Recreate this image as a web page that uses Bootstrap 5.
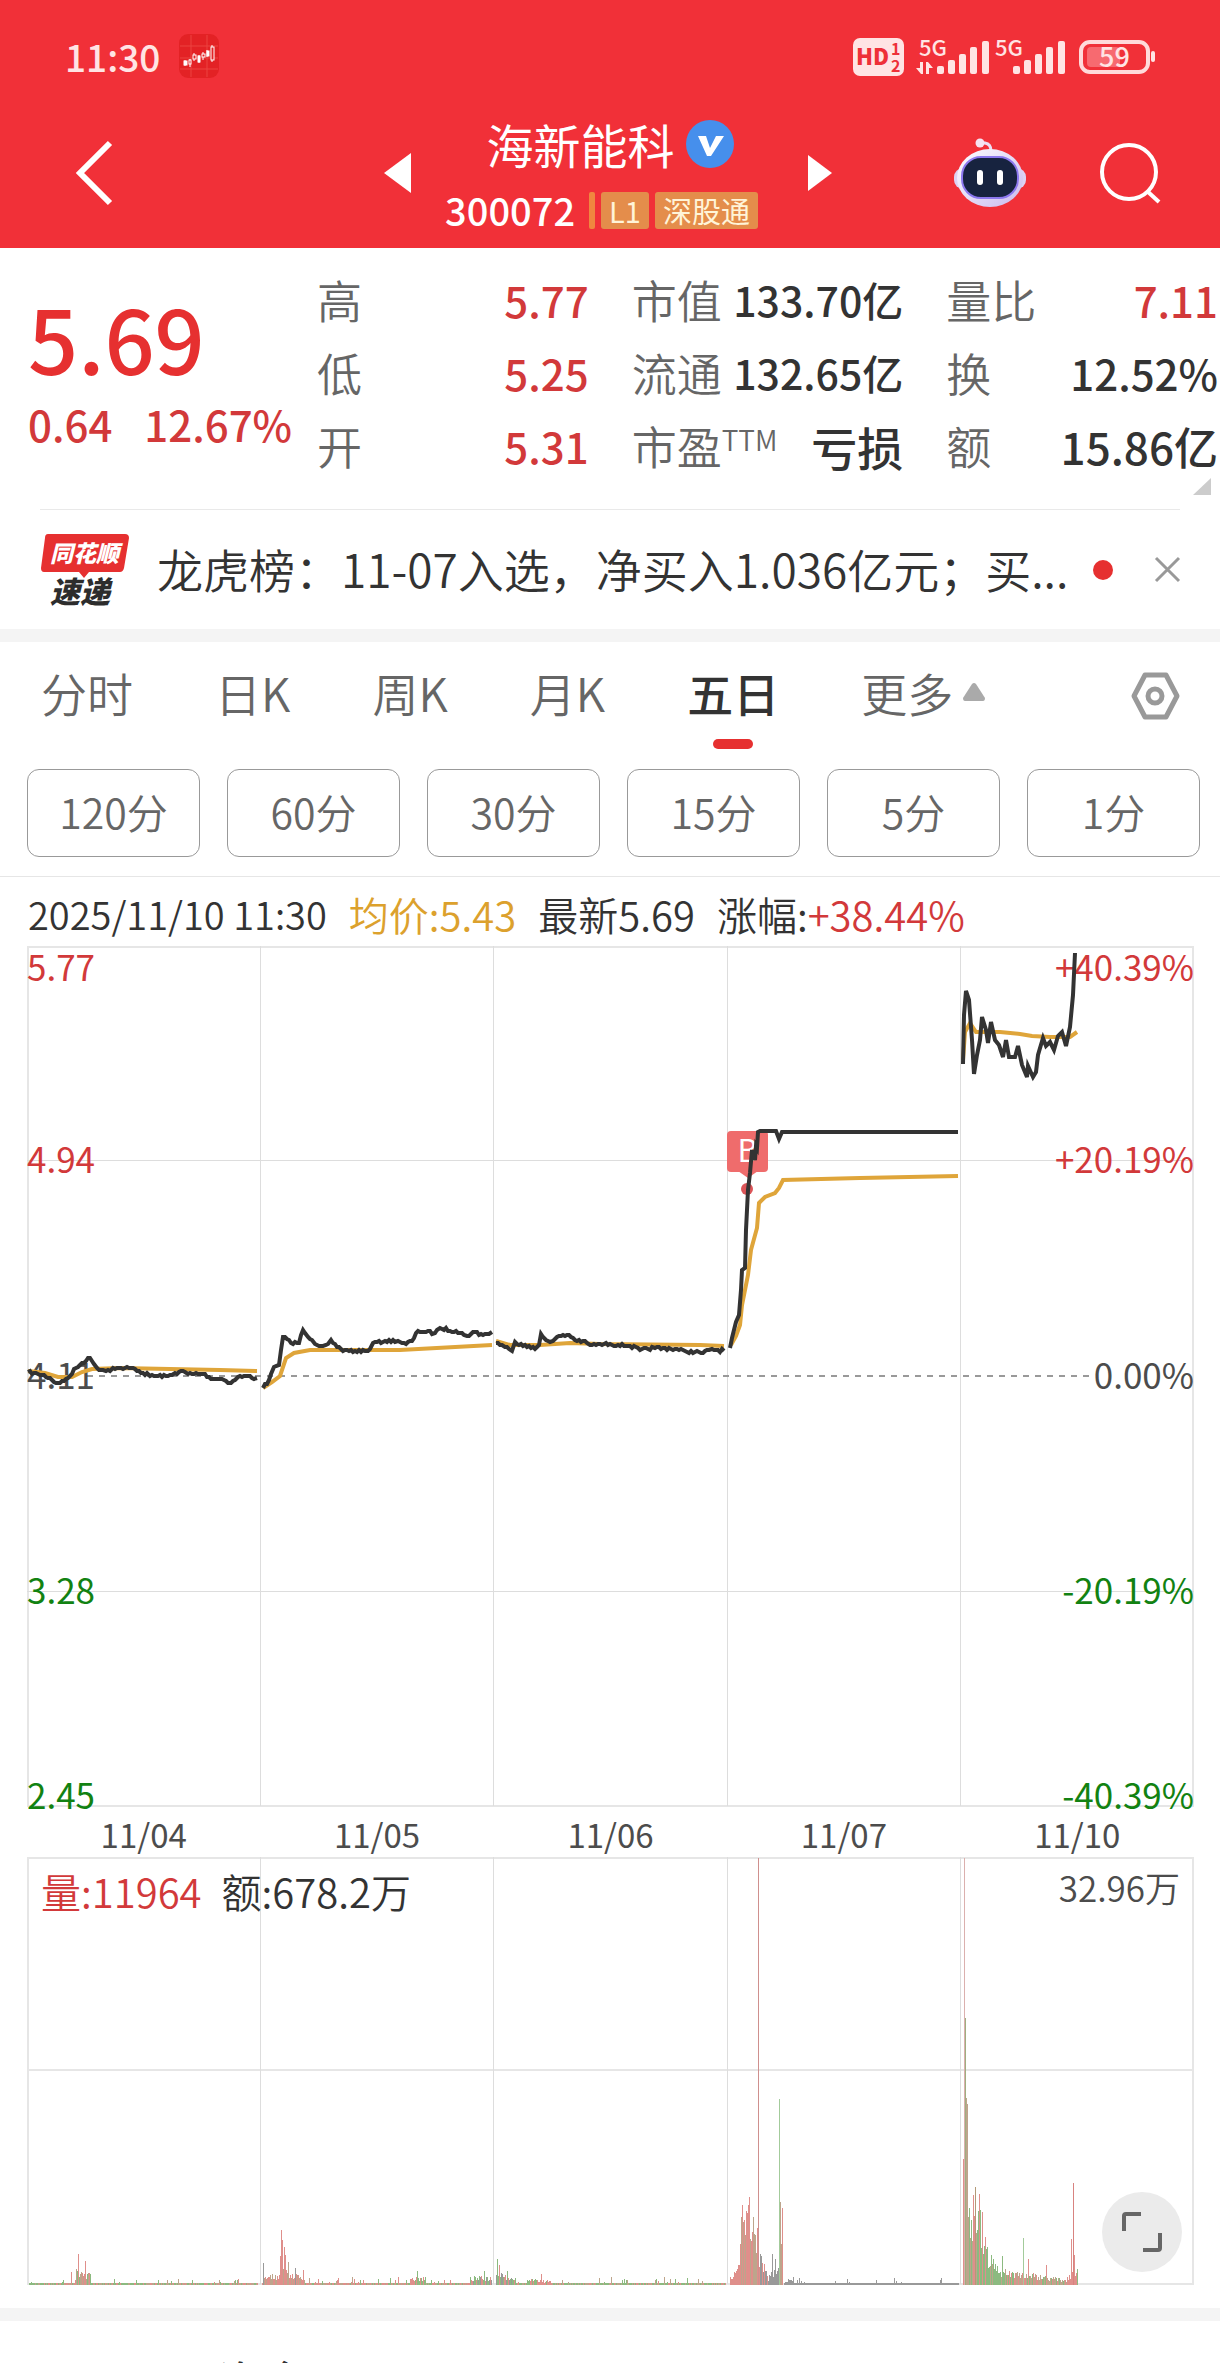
<!DOCTYPE html>
<html lang="zh-CN">
<head>
<meta charset="utf-8">
<meta name="viewport" content="width=device-width, initial-scale=1">
<title>海新能科 300072</title>
<link rel="stylesheet" href="https://cdn.jsdelivr.net/npm/bootstrap@5.3.0/dist/css/bootstrap.min.css">
<style>
  :root { --up:#d2393a; --down:#128212; --ink:#333; --soft:#666; --rule:#e6e6e6; --band:#f4f4f4; }
  body { font-family:"Noto Sans CJK SC","Noto Sans",sans-serif; color:var(--ink); background:#fff; line-height:1; overflow-x:hidden; }
  button { font-family:inherit; }
  svg { display:block; flex:none; overflow:visible; }
  .up { color:var(--up); } .down { color:var(--down); }
  .bare { background:none; border:0; padding:0; color:inherit; }
  .app-head { background:#f13038; color:#fff; }
  .status-row { height:112px; padding:0 64px 0 65px; }
  .clock-group { gap:19px; }
  .clock { font-size:37px; line-height:48px; color:#ffe4e4; font-weight:500; }
  .head-row { display:grid; grid-template-columns:1fr auto 1fr; height:136px; padding:0 60px 14px 76px; }
  .quote-switch { margin-left:-20px; }
  .title-block { padding:0 50px 0 34px; }
  .name-line { gap:12px; padding-left:18px; margin-bottom:18px; }
  .code-line { gap:6px; }
  .stock-name { font-size:47px; line-height:56px; font-weight:400; }
  .stock-code { font-size:38px; line-height:40px; font-weight:500; }
  .tag { background:#e48d4b; color:#fff4d8; font-size:29px; line-height:37px; border-radius:3px; padding:0 8px; }
  .tag-bar { width:6px; height:37px; background:#f0863f; border-radius:2px; }
  .tools { gap:73px; }
  .quote { padding:15px 2px 27px 0; position:relative; }
  .quote-main { flex:0 0 317px; padding-left:28px; }
  .last-price { font-size:88px; line-height:96px; font-weight:500; color:#e63030; padding-top:26px; }
  .chg { font-size:42px; line-height:48px; font-weight:500; gap:32px; padding-top:15px; }
  .stats { display:grid; grid-template-columns:repeat(3,1fr); column-gap:43px; grid-auto-rows:73px; }
  .stats dt { font-size:45px; font-weight:350; color:var(--soft); white-space:nowrap; }
  .stats dd { font-size:42px; font-weight:500; white-space:nowrap; }
  .stats dd.cap { font-size:41px; }
  .stats dd.word { font-size:46px; }
  .stats dd.turnover { font-size:44px; }
  .stats sup { font-size:28px; top:-14px; line-height:1; vertical-align:baseline; }
  .corner { right:9px; bottom:14px; border-left:18px solid transparent; border-bottom:17px solid #ccc; }
  .news { margin:0 40px; border-top:1px solid #e9e9e9; height:120px; }
  .news-text { font-size:46px; line-height:60px; margin-left:27px; padding-bottom:4px; font-weight:350; color:var(--ink); text-decoration:none; }
  .dot { width:20px; height:20px; background:#e63030; margin:0 42px 0 20px; }
  .band { height:13px; background:var(--band); }
  .tabs { padding:22px 40px 0 41px; height:127px; }
  .tabs ul { gap:82px; }
  .tabs a { font-size:46px; line-height:56px; color:var(--soft); text-decoration:none; font-weight:350; white-space:nowrap; }
  .tabs a.current { color:var(--ink); font-weight:500; }
  .tabs a.current::after { content:""; display:block; width:40px; height:10px; margin:19px auto 0; border-radius:5px; background:#e63030; }
  .more { gap:10px; }
  .periods { display:grid; grid-template-columns:repeat(6,1fr); gap:27px; padding:0 20px 19px 27px; border-bottom:1px solid var(--rule); }
  .periods button { height:88px; font-size:41px; line-height:48px; color:var(--soft); border:1px solid #999; border-radius:12px; background:#fff; padding:0 0 5px; font-weight:350; }
  .readout { font-size:40px; line-height:44px; padding:15px 28px 10px; gap:22px; font-weight:350; white-space:nowrap; }
  .stamp { font-size:38px; }
  .avg { color:#dca12d; }
  .plots { margin:0 26px 0 27px; }
  .price-plot { position:relative; height:860px; }
  .vol-plot { position:relative; height:428px; }
  .price-plot > svg, .vol-plot > svg { position:absolute; left:0; top:0; width:100%; height:100%; }
  .axis { position:absolute; font-size:35px; line-height:40px; }
  .ax-l { left:0; } .ax-r { right:0; }
  .zero { color:#4c4c4c; }
  .t0 { top:0; } .t1 { top:25%; margin-top:-23px; } .t2 { top:50%; margin-top:-22px; } .t3 { top:75%; margin-top:-22px; } .t4 { bottom:-8px; }
  .buy-mark { position:absolute; left:60%; top:185px; width:41px; height:41px; border-radius:4px; background:#ef6c6c; color:#fff; font-size:31px; line-height:36px; text-align:center; }
  .buy-mark::before { content:""; position:absolute; left:11px; top:40px; border:10px solid transparent; border-top:7px solid #ef6c6c; border-bottom:0; }
  .buy-mark::after { content:""; position:absolute; left:14px; top:52px; width:12px; height:12px; border-radius:50%; background:#dc5558; }
  .dates { display:grid; grid-template-columns:repeat(5,1fr); font-size:33px; line-height:40px; text-align:center; color:#4c4c4c; padding:8px 0 3px; }
  .legend-line { position:absolute; left:14px; top:12px; font-size:40px; line-height:44px; gap:20px; font-weight:350; }
  .vol-max { position:absolute; right:14px; top:10px; font-size:35px; line-height:40px; color:#4c4c4c; font-weight:350; }
  .expand { position:absolute; right:12px; bottom:13px; width:80px; height:80px; background:#ebebeb; border-radius:50%; }
  .chart-end { margin-top:23px; }
  .next-panel { height:42px; overflow:hidden; padding:31px 0 0 218px; font-size:44px; line-height:56px; font-weight:500; }
</style>
</head>
<body>
<header class="app-head">
  <div class="status-row d-flex align-items-center justify-content-between">
    <div class="clock-group d-flex align-items-center">
      <span class="clock">11:30</span>
      <svg width="40" height="44" viewBox="0 0 40 44"><rect width="40" height="44" rx="9" fill="#e32225"/><path d="M12 1v42M28 1v42M1 12h38M1 24h38M1 35h38" stroke="#ec4340" stroke-width="1"/><g stroke="#fff" fill="#fff"><path d="M6 26v6M11 25v8M15 19v8M20 21v8M24 18v8M28 16v7M33 11v17"/><rect x="5" y="27" width="3" height="4"/><rect x="10" y="26" width="2" height="4" fill="#e32225"/><rect x="14" y="21" width="3" height="4" fill="#e32225"/><rect x="19" y="22" width="2" height="6"/><rect x="23" y="20" width="3" height="3" fill="#e32225"/><rect x="28" y="17" width="2" height="5"/><rect x="32" y="13" width="3" height="13" fill="#e32225"/></g></svg>
    </div>
    <svg width="303" height="42" viewBox="0 0 303 42" fill="#ffe4e4" font-family="Noto Sans CJK SC, sans-serif" font-weight="700">
      <rect x="0" y="3" width="51" height="38" rx="7"/>
      <text x="3" y="30" font-size="22" font-weight="900" fill="#ee3038">HD</text><text x="38" y="20" font-size="16" fill="#ee3038">1</text><text x="38" y="37" font-size="16" fill="#ee3038">2</text>
      <text x="66" y="21" font-size="22" font-weight="500">5G</text>
      <path d="M67 27h3v12h-2l-5-6h4zM73 39h3l0-6h4l-5-6h-2z"/>
      <g id="bars"><rect x="84" y="31" width="7" height="8" rx="2"/><rect x="95" y="25" width="7" height="14" rx="2"/><rect x="106" y="19" width="7" height="20" rx="2"/><rect x="117" y="12" width="7" height="27" rx="2"/><rect x="129" y="6" width="7" height="33" rx="2"/></g>
      <text x="142" y="21" font-size="22" font-weight="500">5G</text>
      <use href="#bars" x="76"/>
      <rect x="228" y="7" width="67" height="30" rx="9" fill="none" stroke="#ffdada" stroke-width="4"/><rect x="234" y="12" width="33" height="20" rx="4" fill="#f76a70"/><rect x="298" y="16" width="4" height="11" rx="2"/>
      <text x="246" y="32" font-size="27" font-weight="500">59</text>
    </svg>
  </div>
  <div class="head-row align-items-center">
    <button class="bare text-start" type="button" aria-label="返回"><svg width="37" height="66" viewBox="0 0 37 66"><path d="M34 3L4 33l30 30" fill="none" stroke="#fff" stroke-width="6"/></svg></button>
    <div class="quote-switch d-flex align-items-center">
      <button class="bare" type="button" aria-label="上一只"><svg width="27" height="40" viewBox="0 0 27 40"><path d="M0 20L27 0v40z" fill="#fff"/></svg></button>
      <div class="title-block">
        <div class="name-line d-flex align-items-center justify-content-center"><h1 class="stock-name m-0">海新能科</h1>
          <svg width="48" height="48" viewBox="0 0 48 48"><circle cx="24" cy="24" r="24" fill="#468fec"/><path d="M12 16h8l4 12 6-12h8L25 36h-4z" fill="#fff"/></svg></div>
        <div class="code-line d-flex align-items-center justify-content-center"><span class="stock-code me-2">300072</span><span class="tag-bar"></span><span class="tag">L1</span><span class="tag">深股通</span></div>
      </div>
      <button class="bare" type="button" aria-label="下一只"><svg width="24" height="36" viewBox="0 0 24 36"><path d="M24 18L0 0v36z" fill="#fff"/></svg></button>
    </div>
    <div class="tools d-flex align-items-center justify-content-end">
      <button class="bare" type="button" aria-label="智能助手"><svg width="74" height="70" viewBox="0 0 74 70"><defs><linearGradient id="hm" x1="0" y1="0" x2="1" y2="1"><stop offset="0" stop-color="#fff"/><stop offset="1" stop-color="#c9b9ee"/></linearGradient></defs><path d="M27 5h5q6 1 6 8" fill="none" stroke="#ecdff5" stroke-width="3"/><circle cx="27" cy="5" r="4.500" fill="#f6e3f2"/><rect x="1" y="30" width="72" height="21" rx="9" fill="#ddd2f3"/><ellipse cx="37" cy="40" rx="33" ry="29" fill="url(#hm)"/><rect x="9" y="19" width="56" height="41" rx="19" fill="#17233f" stroke="#8c78ee" stroke-width="2"/><rect x="24" y="32" width="6" height="15" rx="3" fill="#fff"/><rect x="44" y="32" width="6" height="15" rx="3" fill="#fff"/></svg></button>
      <button class="bare" type="button" aria-label="搜索"><svg width="60" height="60" viewBox="0 0 60 60" fill="none" stroke="#fff" stroke-width="4"><circle cx="29" cy="29" r="27"/><path d="M47 48l12 11"/></svg></button>
    </div>
  </div>
</header>

<main>
  <section class="quote d-flex">
    <div class="quote-main">
      <div class="last-price">5.69</div>
      <div class="chg up d-flex"><span>0.64</span><span>12.67%</span></div>
    </div>
    <dl class="stats flex-grow-1 m-0">
      <div class="d-flex align-items-center justify-content-between"><dt>高</dt><dd class="m-0 up">5.77</dd></div>
      <div class="d-flex align-items-center justify-content-between"><dt>市值</dt><dd class="m-0 cap">133.70亿</dd></div>
      <div class="d-flex align-items-center justify-content-between"><dt>量比</dt><dd class="m-0 up">7.11</dd></div>
      <div class="d-flex align-items-center justify-content-between"><dt>低</dt><dd class="m-0 up">5.25</dd></div>
      <div class="d-flex align-items-center justify-content-between"><dt>流通</dt><dd class="m-0 cap">132.65亿</dd></div>
      <div class="d-flex align-items-center justify-content-between"><dt>换</dt><dd class="m-0">12.52%</dd></div>
      <div class="d-flex align-items-center justify-content-between"><dt>开</dt><dd class="m-0 up">5.31</dd></div>
      <div class="d-flex align-items-center justify-content-between"><dt>市盈<sup>TTM</sup></dt><dd class="m-0 word">亏损</dd></div>
      <div class="d-flex align-items-center justify-content-between"><dt>额</dt><dd class="m-0 turnover">15.86亿</dd></div>
    </dl>
    <span class="corner position-absolute"></span>
  </section>

  <section class="news d-flex align-items-center">
    <svg width="90" height="74" viewBox="0 0 90 74" font-family="Noto Sans CJK SC, sans-serif" font-weight="900" font-style="italic"><path d="M8 1h77q4 0 4 4l-5 30q-1 4-4 4H49l-5 6-5-6H4q-3 0-3-4L5 5q0-4 3-4z" fill="#e63030"/><text x="10" y="29" font-size="23" fill="#fff">同花顺</text><text x="10" y="70" font-size="30" fill="#2d2d2d">速递</text></svg>
    <a href="#" class="news-text flex-grow-1 text-nowrap">龙虎榜：11-07入选，净买入1.036亿元；买...</a>
    <span class="dot rounded-circle flex-shrink-0"></span>
    <button class="bare" type="button" aria-label="关闭"><svg width="25" height="25" viewBox="0 0 25 25"><path d="M1 1l23 23M24 1L1 24" stroke="#999" stroke-width="3"/></svg></button>
  </section>
  <div class="band"></div>

  <nav class="tabs d-flex justify-content-between align-items-start">
    <ul class="list-unstyled d-flex m-0">
      <li><a href="#">分时</a></li><li><a href="#">日K</a></li><li><a href="#">周K</a></li><li><a href="#">月K</a></li>
      <li><a href="#" class="current d-block" aria-current="page">五日</a></li>
      <li><a href="#" class="more d-flex align-items-center">更多<svg width="22" height="18" viewBox="0 0 22 18"><path d="M9 1q2-2 4 0l9 14q0 3-2 3H2q-2 0-2-3z" fill="#aaa"/></svg></a></li>
    </ul>
    <button class="bare mt-2" type="button" aria-label="设置"><svg width="49" height="48" viewBox="0 0 49 48" fill="none" stroke="#999" stroke-width="5" stroke-linejoin="round"><path d="M14 3h21l11 21-11 21H14L3 24z"/><circle cx="24" cy="24" r="7"/></svg></button>
  </nav>

  <div class="periods">
    <button type="button">120分</button><button type="button">60分</button><button type="button">30分</button><button type="button">15分</button><button type="button">5分</button><button type="button">1分</button>
  </div>

  <div class="readout d-flex"><span class="stamp">2025/11/10 11:30</span><span class="avg">均价:5.43</span><span>最新5.69</span><span>涨幅:<span class="up">+38.44%</span></span></div>

  <div class="plots">
    <div class="price-plot">
      <svg viewBox="27 946 1167 860" preserveAspectRatio="none" aria-hidden="true">
        <g fill="none" stroke="#e6e6e6" stroke-width="2"><rect x="28" y="947" width="1165" height="859"/><path stroke-width="1" stroke="#ddd" d="M260.500 946V1806M493.500 946V1806M727.500 946V1806M960.500 946V1806M27 1160.500H1194M27 1591.500H1194"/></g>
        <path d="M87 1376H1090" stroke="#999" stroke-width="2" stroke-dasharray="6 6"/>
      </svg>
      <span class="axis ax-l t0 up">5.77</span><span class="axis ax-l t1 up">4.94</span><span class="axis ax-l t2 zero">4.11</span><span class="axis ax-l t3 down">3.28</span><span class="axis ax-l t4 down">2.45</span>
      <span class="axis ax-r t0 up">+40.39%</span><span class="axis ax-r t1 up">+20.19%</span><span class="axis ax-r t2 zero">0.00%</span><span class="axis ax-r t3 down">-20.19%</span><span class="axis ax-r t4 down">-40.39%</span>
      <span class="buy-mark">B</span>
      <svg id="price" viewBox="27 946 1167 860" preserveAspectRatio="none" role="img" aria-label="五日分时走势"></svg>
    </div>
    <div class="dates"><span>11/04</span><span>11/05</span><span>11/06</span><span>11/07</span><span>11/10</span></div>
    <div class="vol-plot">
      <svg id="volume" viewBox="27 1857 1167 428" preserveAspectRatio="none" role="img" aria-label="成交量">
        <g fill="none" stroke="#e6e6e6" stroke-width="2"><rect x="28" y="1858" width="1165" height="426"/><path d="M27 2070H1194"/><path stroke-width="1" stroke="#ddd" d="M260.500 1857V2284M493.500 1857V2284M727.500 1857V2284M960.500 1857V2284"/></g>
      </svg>
      <div class="legend-line d-flex"><span class="up">量:11964</span><span>额:678.2万</span></div>
      <span class="vol-max">32.96万</span>
      <button class="expand bare" type="button" aria-label="全屏"><svg class="m-auto" width="42" height="42" viewBox="0 0 42 42" fill="none" stroke="#666" stroke-width="4"><path d="M3 20V5q0-2 2-2h15M39 22v15q0 2-2 2H22"/></svg></button>
    </div>
  </div>
  <div class="band chart-end"></div>
  <section class="next-panel">资金</section>
</main>

<script src="https://cdn.jsdelivr.net/npm/bootstrap@5.3.0/dist/js/bootstrap.bundle.min.js"></script>
<script>
  const NS = 'http://www.w3.org/2000/svg';
  let seed = 7;
  const rnd = () => (seed = (seed * 16807) % 2147483647) / 2147483647;

  // One pair of curves per trading day: the running average and the last price.
  const averages = [
    '28,1371 45,1373 58,1377 72,1377 82,1372 92,1369 120,1368 220,1370 257,1371',
    '263,1388 272,1382 280,1376 286,1358 294,1353 310,1350 400,1350 492,1345',
    '496,1341 510,1345 540,1345 570,1343 600,1344 700,1345 724,1346',
    '731,1345 736,1336 740,1325 742,1305 748,1275 751,1250 757,1228 759,1203 765,1197 775,1193 779,1188 783,1180 860,1178 958,1176',
    '963,1060 965,1032 970,1023 976,1032 1000,1032 1020,1034 1032,1036 1050,1037 1070,1037 1077,1032'
  ];
  const prices = [
    '28,1372 38,1374 50,1378 56,1383 64,1381 70,1376 76,1368 82,1363 88,1358 92,1361 97,1368 106,1371 113,1368 121,1368 135,1369 143,1373 150,1376 168,1376 175,1373 181,1371 188,1374 203,1374 213,1379 222,1379 231,1383 238,1377 246,1376 257,1378',
    '263,1388 269,1380 274,1367 279,1365 281,1350 283,1337 287,1339 291,1343 299,1343 303,1330 308,1337 315,1344 326,1345 331,1340 337,1347 343,1351 368,1351 373,1343 385,1341 398,1341 406,1344 412,1341 418,1331 435,1333 440,1328 456,1331 467,1336 475,1332 483,1335 492,1332',
    '496,1343 505,1347 512,1351 515,1342 525,1345 535,1349 539,1345 541,1334 546,1340 553,1341 557,1337 569,1335 575,1340 583,1341 590,1345 610,1344 630,1346 640,1350 655,1348 675,1349 685,1351 703,1353 712,1349 724,1351',
    '730,1348 732,1338 736,1322 739,1315 741,1290 742,1270 745,1268 746,1230 748,1190 750,1173 752,1150 755,1160 756,1146 757,1148 758,1132 760,1131 776,1131 779,1139 782,1132 958,1132',
    '963,1064 964,1015 966,991 969,1000 972,1040 974,1074 977,1055 980,1040 982,1017 986,1030 988,1043 991,1022 995,1040 999,1045 1003,1057 1006,1040 1009,1057 1015,1057 1018,1046 1022,1065 1027,1077 1028,1066 1033,1077 1036,1072 1038,1055 1043,1038 1046,1046 1050,1042 1054,1050 1058,1036 1062,1032 1066,1046 1070,1027 1073,995 1075,953'
  ];
  const parse = s => s.split(' ').map(p => p.split(',').map(Number));
  // Minute ticks wobble about a pixel round the trend.
  function ticks(points) {
    const out = [points[0]];
    for (let i = 1; i < points.length; i++) {
      const [x0, y0] = points[i - 1], [x1, y1] = points[i];
      for (let x = x0 + 2; x < x1 - 1; x += 2)
        out.push([x, Math.round(y0 + (y1 - y0) * (x - x0) / (x1 - x0) + (rnd() * 3 - 1.5))]);
      out.push([x1, y1]);
    }
    return out;
  }
  function line(points, colour, width) {
    const el = document.createElementNS(NS, 'polyline');
    el.setAttribute('points', points.map(p => p.join(',')).join(' '));
    el.setAttribute('fill', 'none');
    el.setAttribute('stroke', colour);
    el.setAttribute('stroke-width', width);
    document.getElementById('price').appendChild(el);
  }
  averages.forEach(a => line(parse(a), '#dfa53a', 4));
  prices.forEach((p, i) => line(i < 3 ? ticks(parse(p)) : parse(p), '#333', 4));

  // Volume bars: [from x, to x, height at from, height at to, colours]
  const R = '#df8f8b', G = '#8cba80', D = '#999', M = '#bda58c';
  const bars = {};
  const put = (x, h, c) => { bars[x] = [h, c]; };
  const run = (a, b, ha, hb, cs) => {
    for (let x = a; x <= b; x++) {
      const h = ha + (hb - ha) * (x - a) / Math.max(1, b - a);
      put(x, Math.max(1, Math.round(h * (0.45 + rnd() * 0.6))), cs[Math.floor(rnd() * cs.length)]);
    }
  };
  const quiet = (a, b, cs, top) => {
    for (let x = a; x <= b; x++) put(x, rnd() < 0.13 ? 2 + Math.round(rnd() * top) : 2, cs[Math.floor(rnd() * cs.length)]);
  };
  quiet(29, 257, [R, G, M, G], 5); run(76, 90, 16, 12, [R, G, M]); put(71, 13, R); put(78, 31, R); put(85, 24, R);
  quiet(262, 491, [R, G, M, R], 6); run(264, 279, 9, 12, [R, R, M]); run(280, 288, 42, 22, [R, R, M]); run(289, 304, 13, 10, [R, M]); put(263, 22, D); put(281, 55, R); put(282, 45, R); put(284, 38, R); put(295, 17, D); put(303, 15, R); run(410, 425, 8, 8, [R, G]); put(417, 14, G); run(470, 491, 8, 9, [D, R, G]); put(484, 14, G);
  quiet(496, 725, [R, G, M, G], 6); run(496, 515, 14, 7, [R, G, D]); put(497, 26, G); put(499, 20, R); put(507, 14, G); run(527, 550, 6, 5, [R, G]); put(541, 11, R);
  quiet(785, 958, [D], 5); run(730, 739, 8, 25, [R]); run(740, 757, 80, 62, [R, R, M]); put(742, 80, R); put(749, 88, R); put(748, 80, R);
  run(759, 768, 38, 8, [D, R]); run(769, 778, 12, 22, [D]); put(772, 31, D); put(775, 26, D); put(758, 427, '#cf908e'); put(779, 186, '#a3cb9b'); put(780, 83, M); put(781, 41, M); put(782, 77, R); run(784, 793, 4, 8, [D]);
  run(968, 985, 100, 62, [G, G, M, R]); run(986, 1000, 38, 16, [G, M]); run(1001, 1066, 17, 6, [G, R, M]); run(1067, 1077, 10, 20, [R]);
  put(963, 126, R); put(964, 427, '#dbb0ae'); put(965, 267, '#9fae80'); put(966, 187, M); put(967, 181, M); put(975, 98, '#b39a78'); put(979, 91, R); put(982, 73, R); put(985, 48, R); put(1002, 29, G); put(1023, 47, '#a3cb9b'); put(1028, 26, R); put(1046, 20, R); put(1071, 46, R); put(1073, 102, '#d88380'); put(1074, 30, R); put(1077, 16, G);
  const vol = document.getElementById('volume');
  for (const x in bars) {
    const el = document.createElementNS(NS, 'rect');
    el.setAttribute('x', x); el.setAttribute('y', 2285 - bars[x][0]);
    el.setAttribute('width', 1); el.setAttribute('height', bars[x][0]);
    el.setAttribute('fill', bars[x][1]);
    vol.appendChild(el);
  }
</script>
</body>
</html>
